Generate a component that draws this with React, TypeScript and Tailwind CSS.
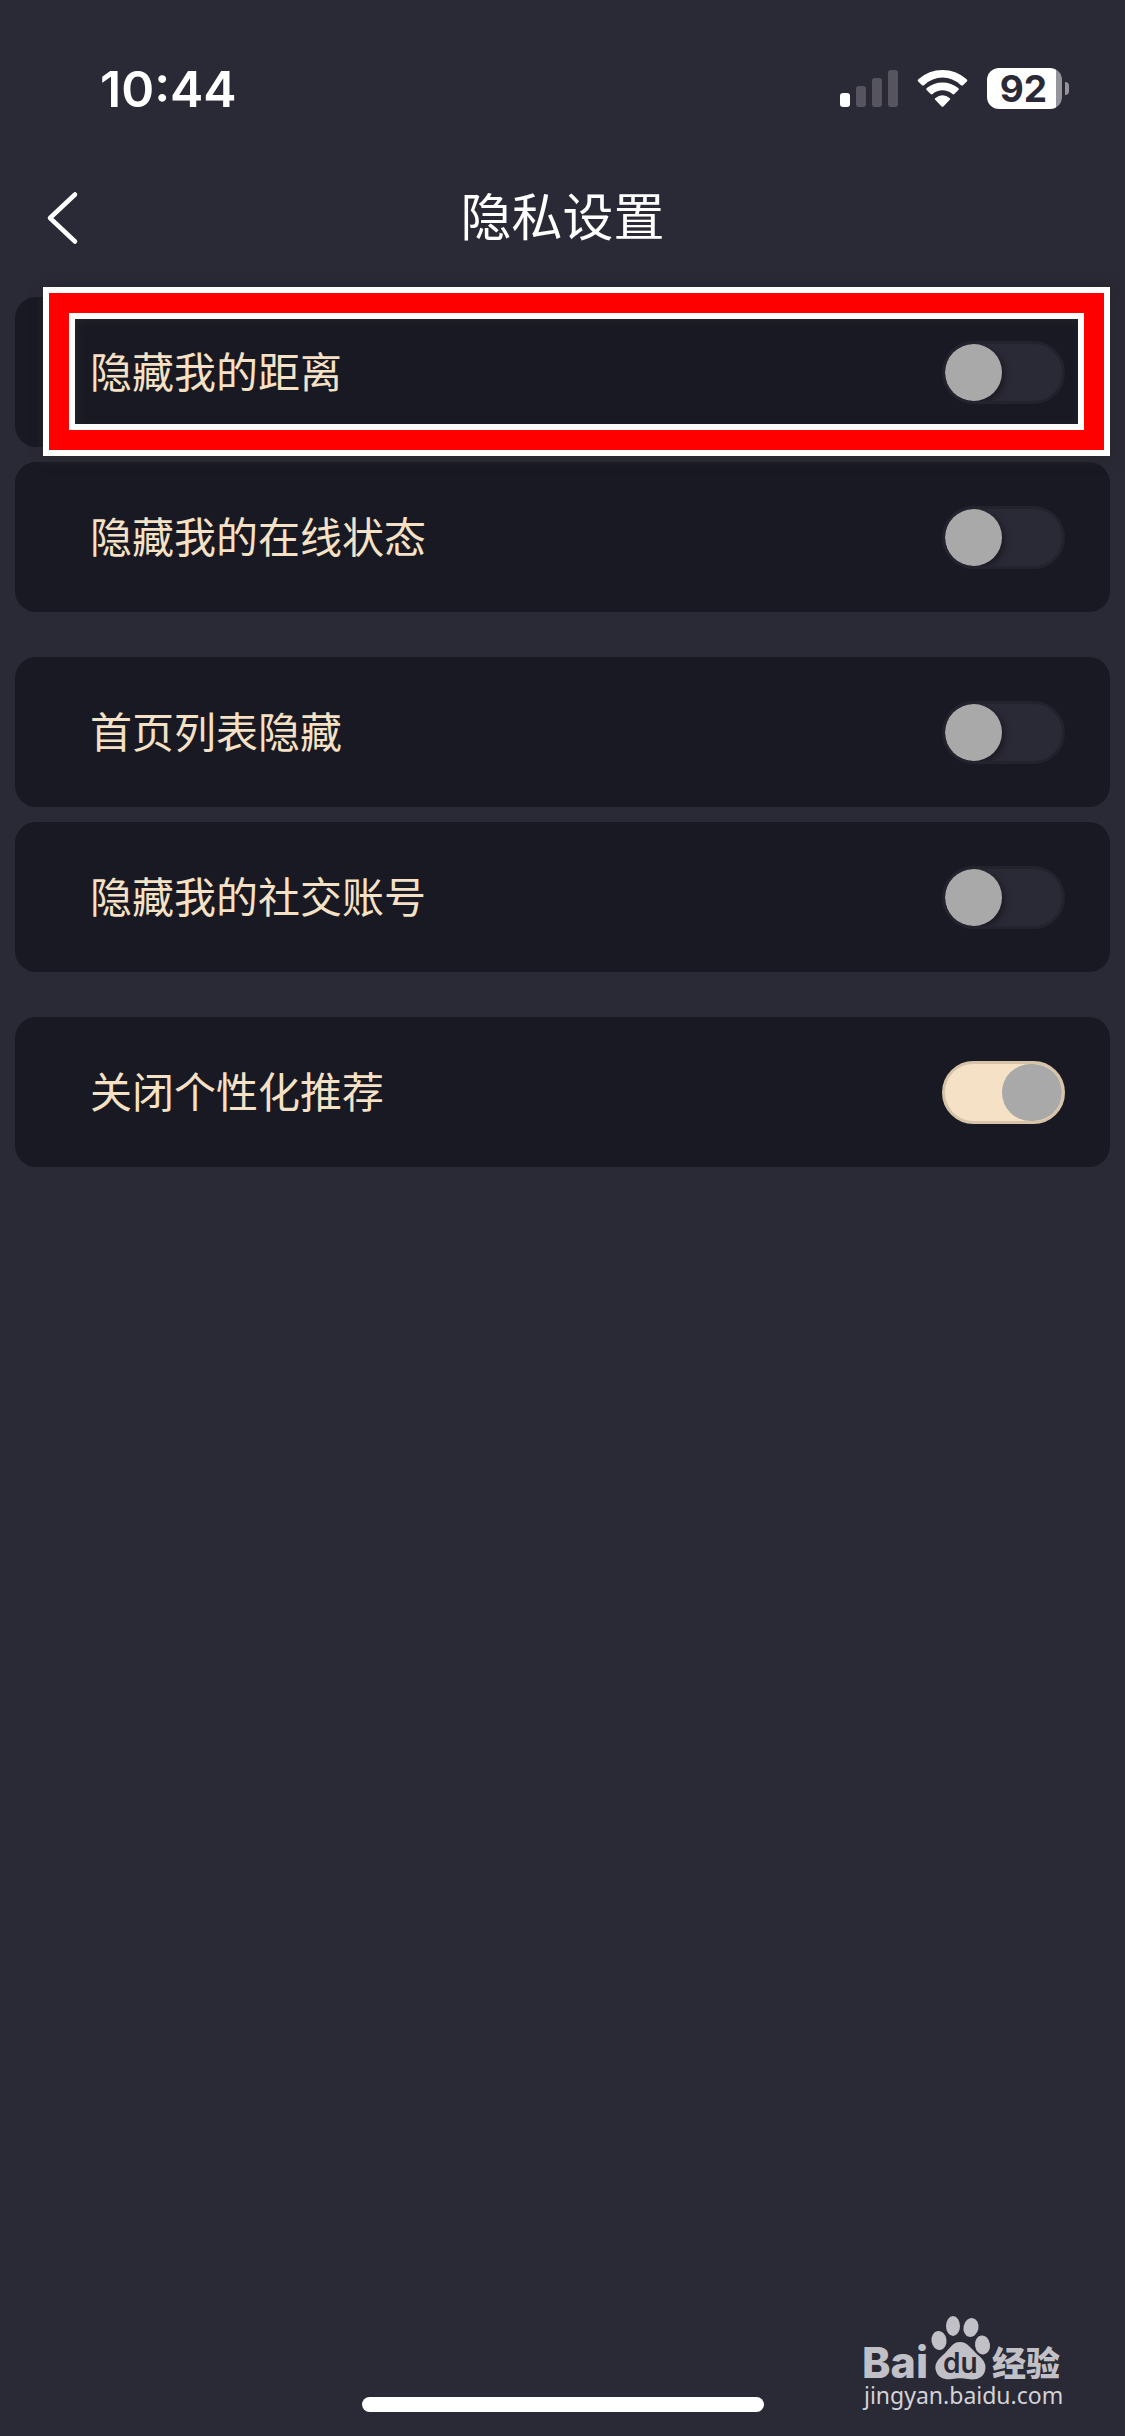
import { useState } from "react";

type Setting = { id: string; label: string; on: boolean; highlighted?: boolean };

const groups: Setting[][] = [
  [
    { id: "distance", label: "隐藏我的距离", on: false, highlighted: true },
    { id: "online", label: "隐藏我的在线状态", on: false },
  ],
  [
    { id: "home-list", label: "首页列表隐藏", on: false },
    { id: "social", label: "隐藏我的社交账号", on: false },
  ],
  [{ id: "recommend", label: "关闭个性化推荐", on: true }],
];

function StatusBar() {
  return (
    <div className="flex h-[177px] items-center justify-between pr-14 pl-[100px]">
      <time className="font-['Inter'] text-[50px] leading-none font-semibold">10:44</time>
      <div className="flex items-center">
        <svg width="58" height="37" viewBox="0 0 58 37" aria-label="信号">
          <rect x="0" y="23" width="10" height="14" rx="3" fill="#fff" />
          <g fill="#56555f">
            <rect x="16" y="16" width="10" height="21" rx="3" />
            <rect x="32" y="8" width="10" height="29" rx="3" />
            <rect x="48" y="0" width="10" height="37" rx="3" />
          </g>
        </svg>
        <svg className="ml-[19px]" width="52" height="37" viewBox="0 0 52 37" fill="#fff" aria-label="Wi-Fi">
          <path d="M1.2 11.6Q0 10.4 1.3 9.2Q12 0 25.5 0T49.7 9.2Q51 10.4 49.8 11.6L46 15.2Q45 16 44 15.2Q35.5 7.6 25.5 7.6T7 15.2Q6 16 5 15.2Z" />
          <path d="M9.6 20Q8.6 19 9.8 18Q16.5 12.4 25.5 12.4T41.2 18Q42.4 19 41.4 20L37.3 24Q36.5 24.8 35.4 24Q31 20.3 25.5 20.3T15.6 24Q14.5 24.8 13.7 24Z" />
          <path d="M18.2 29.8Q17.3 28.8 18.5 28Q21.5 25.3 25.5 25.3T32.5 28Q33.7 28.8 32.8 29.8L26.6 36.2Q25.5 37.3 24.4 36.2Z" />
        </svg>
        <div className="ml-[18px] flex h-[41px] w-[75px] items-center justify-center rounded-[12px] bg-[linear-gradient(to_right,#fff_69px,#94949a_69px)]">
          <span className="pr-0.5 font-['Inter'] text-[37px] leading-[41px] font-bold text-[#2a2936]">92</span>
        </div>
        <div className="ml-[3px] h-[13px] w-1 rounded-r-full bg-[#94949a]" />
      </div>
    </div>
  );
}

function Header() {
  return (
    <header className="grid h-[81px] grid-cols-[1fr_auto_1fr] items-center px-[45px]">
      <button type="button" aria-label="返回" className="w-9">
        <svg width="36" height="54" viewBox="0 0 36 54" fill="none" stroke="#fff" strokeWidth="4.5" strokeLinecap="round" strokeLinejoin="round">
          <path d="M30 3.5L5 27L30 50.5" />
        </svg>
      </button>
      <h1 className="pb-2 text-[51px] leading-[72px] font-normal">隐私设置</h1>
    </header>
  );
}

function Row({ setting }: { setting: Setting }) {
  const [on, setOn] = useState(setting.on);
  return (
    <li className="relative flex h-[150px] items-center justify-between rounded-[21px] bg-[#191923] pr-[45px] pl-[75px]">
      <label htmlFor={setting.id} className="pb-1 text-[42px] leading-[60px] font-normal text-[#f5e1c6]">
        {setting.label}
      </label>
      <input
        id={setting.id}
        type="checkbox"
        role="switch"
        checked={on}
        onChange={(e) => setOn(e.target.checked)}
        className="flex h-[63px] w-[123px] shrink-0 appearance-none overflow-hidden rounded-full border-3 border-[#23232e] bg-[#2a2936] before:size-[57px] before:rounded-full before:bg-[#a9a9a9] before:shadow-[3px_3px_6px_rgba(0,0,0,0.35)] checked:justify-end checked:border-[#d7c3a9] checked:bg-[#f5e1c6] checked:before:w-[60px] checked:before:shadow-none"
      />
      {setting.highlighted && (
        <div className="pointer-events-none absolute -top-[10px] right-0 -bottom-[9px] left-7 z-10 border-6 border-white shadow-[2px_2px_12px_#262829]">
          <div className="h-full border-20 border-[#ff0000]">
            <div className="h-full border-6 border-white shadow-[inset_2px_2px_10px_#24262a]" />
          </div>
        </div>
      )}
    </li>
  );
}

function Watermark() {
  return (
    <svg className="absolute right-[58px] bottom-5" width="208" height="104" viewBox="0 0 208 104" fill="#c1c0c6">
      <text x="3" y="66" fontFamily="Inter" fontWeight="800" fontSize="43">Bai</text>
      <ellipse cx="80" cy="28.5" rx="7.5" ry="9.5" transform="rotate(-8 80 28.5)" />
      <ellipse cx="94" cy="14" rx="7" ry="10" />
      <ellipse cx="112" cy="15.5" rx="7.5" ry="9.5" transform="rotate(12 112 15.5)" />
      <ellipse cx="123.500" cy="33" rx="7.5" ry="9.5" transform="rotate(-8 123.5 33)" />
      <path d="M101 30C93 30 90 38 84 43C78 48 75 53 77 59C79 66 86 68 93 67C99 66 103 66 109 67C117 68.5 124 66 126 59C128 52 124 47 119 43C113 38 109 30 101 30Z" />
      <text x="84" y="61" fontFamily="Inter" fontWeight="600" fontSize="28" fill="#2a2936">du</text>
      <text x="133" y="64" fontFamily="'Noto Sans CJK SC', sans-serif" fontWeight="900" fontSize="34">经验</text>
      <text x="5" y="92" fontFamily="'Noto Sans', sans-serif" fontSize="23" fill="#d4d3d7">jingyan.baidu.com</text>
    </svg>
  );
}

export default function App() {
  return (
    <div className="relative flex min-h-screen flex-col bg-[#2a2936] font-['Noto_Sans_CJK_SC',sans-serif] text-white">
      <StatusBar />
      <Header />
      <main className="flex flex-1 flex-col gap-[45px] px-[15px] pt-[39px]">
        {groups.map((group, i) => (
          <ul key={i} className="flex flex-col gap-[15px]">
            {group.map((s) => (
              <Row key={s.id} setting={s} />
            ))}
          </ul>
        ))}
      </main>
      <div className="mb-6 h-[15px] w-[402px] self-center rounded-full bg-white" />
      <Watermark />
    </div>
  );
}
